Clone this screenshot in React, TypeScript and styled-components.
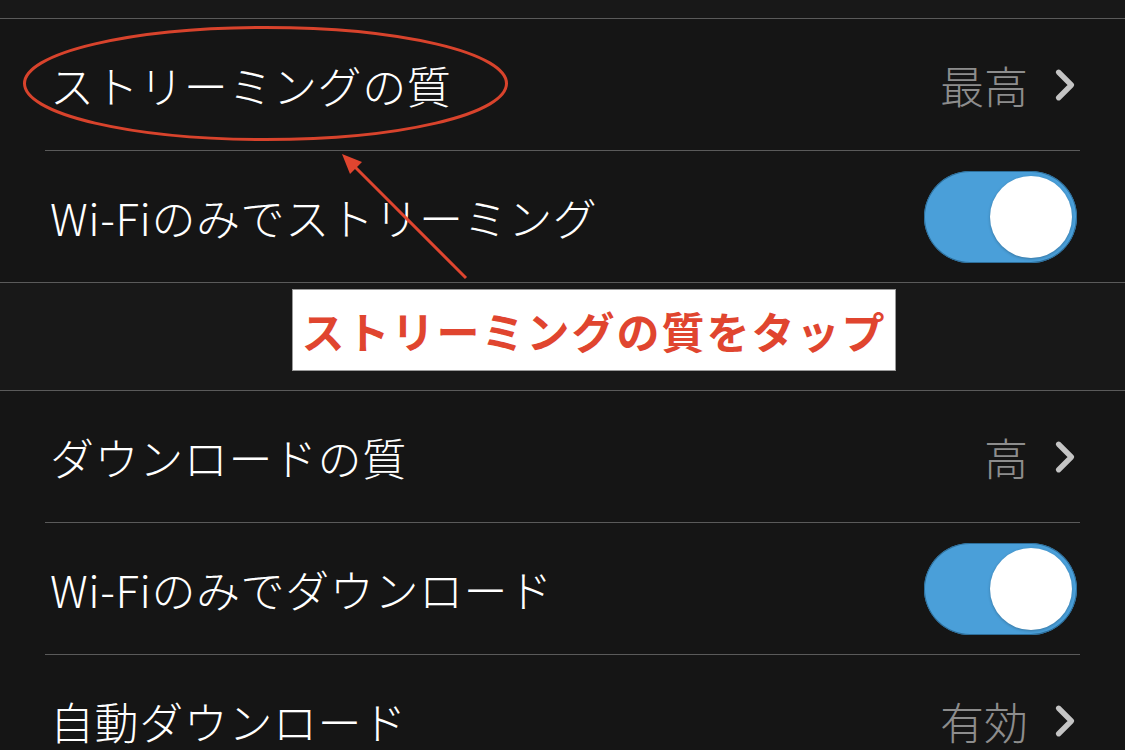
import React, {FC} from 'react';
import styled, {createGlobalStyle} from 'styled-components';

const GlobalStyle = createGlobalStyle`
html, body {
margin:0;
padding:0;
background:#151515;
}
body {
font-family:"Noto Sans CJK JP","Noto Sans",sans-serif;
overflow:hidden;
}
`

interface RowData {
    label:string
    value?:string
    toggle?:boolean
}

const groups:RowData[][] = [
    [
        {label:"ストリーミングの質",value:"最高"},
        {label:"Wi-Fiのみでストリーミング",toggle:true},
    ],
    [
        {label:"ダウンロードの質",value:"高"},
        {label:"Wi-Fiのみでダウンロード",toggle:true},
        {label:"自動ダウンロード",value:"有効"},
    ],
]

const Chevron:FC = () => (
    <ChevronSvg viewBox="0 0 20 32">
        <polyline points="4,4 16,16 4,28" fill="none" stroke="#c4c4c4" strokeWidth="5" strokeLinecap="round" strokeLinejoin="round"/>
    </ChevronSvg>
)

const App: FC = () => {
    return (
        <Page>
            <GlobalStyle/>
            <TopStrip/>
            {groups.map((rows,gi)=>(
                <React.Fragment key={gi}>
                    {gi>0 && <SectionGap/>}
                    <Group>
                        {rows.map(({label,value,toggle},i)=>(
                            <Row key={label}>
                                <RowInner last={i===rows.length-1}>
                                    <Label>{label}</Label>
                                    {toggle ? (
                                        <Switch><Knob/></Switch>
                                    ) : (
                                        <Detail>
                                            <Value>{value}</Value>
                                            <Chevron/>
                                        </Detail>
                                    )}
                                </RowInner>
                            </Row>
                        ))}
                    </Group>
                </React.Fragment>
            ))}
            <Annotation viewBox="0 0 1125 750">
                <ellipse cx="265.5" cy="83.5" rx="241" ry="56" fill="none" stroke="#d8432c" strokeWidth="3"/>
                <line x1="466" y1="278" x2="350" y2="162" stroke="#e0452f" strokeWidth="3"/>
                <polygon points="342,154 362,162 350,174" fill="#e0452f"/>
            </Annotation>
            <Callout>ストリーミングの質をタップ</Callout>
        </Page>
    );
};

const Page = styled.div`
position:relative;
width:1125px;
height:750px;
overflow:hidden;
background:#151515;
`

const TopStrip = styled.div`
height:18px;
background:#181818;
`

const SectionGap = styled.div`
height:107px;
background:#181818;
`

const Group = styled.div`
border-top:1px solid #5a5a5a;
border-bottom:1px solid #5a5a5a;
background:#151515;
`

const Row = styled.div`
padding-left:45px;
`

const RowInner = styled.div<{last?:boolean}>`
height:131px;
width:1035px;
display:flex;
align-items:center;
justify-content:space-between;
border-bottom:${(props)=>props.last ? "none" : "1px solid #5a5a5a"};
`

const Label = styled.div`
color:#ffffff;
font-size:44px;
font-weight:300;
padding-left:5px;
letter-spacing:0.6px;
`

const Detail = styled.div`
display:flex;
align-items:center;
gap:26px;
padding-right:4px;
`

const Value = styled.div`
color:#8d8d8d;
font-size:44px;
font-weight:300;
`

const ChevronSvg = styled.svg`
width:22px;
height:34px;
`

const Switch = styled.div`
width:153px;
height:92px;
border-radius:46px;
background:#4a9fd9;
box-shadow:inset 0 0 0 1px #2d6e9a;
display:flex;
align-items:center;
justify-content:flex-end;
padding-right:5px;
box-sizing:border-box;
margin-right:3px;
`

const Knob = styled.div`
width:82px;
height:82px;
border-radius:50%;
background:#ffffff;
box-shadow:0 1px 3px rgba(0,0,0,0.25);
`

const Annotation = styled.svg`
position:absolute;
left:0;
top:0;
width:1125px;
height:750px;
pointer-events:none;
`

const Callout = styled.div`
position:absolute;
left:292px;
top:289px;
width:604px;
height:82px;
box-sizing:border-box;
background:#ffffff;
border:1px solid #9a9a9a;
color:#e0452f;
font-size:43px;
font-weight:700;
display:flex;
align-items:center;
justify-content:center;
letter-spacing:2px;
`

export default App;
